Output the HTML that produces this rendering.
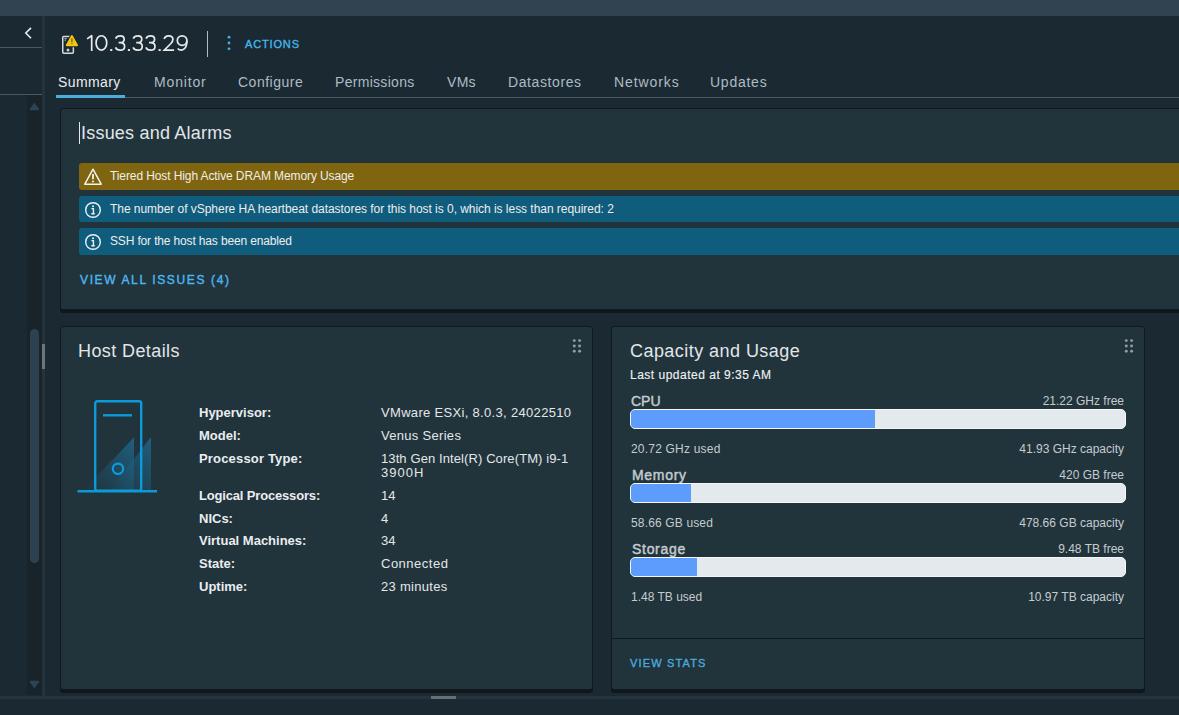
<!DOCTYPE html>
<html><head><meta charset="utf-8">
<style>
*{margin:0;padding:0;box-sizing:border-box}
html,body{width:1179px;height:715px;overflow:hidden;background:#1b2a32;font-family:"Liberation Sans",sans-serif}
.a{position:absolute}
.t{position:absolute;white-space:nowrap;line-height:1}
.card{position:absolute;background:#21333b;border:1px solid #0f1a20;border-radius:3px;box-shadow:0 3px 0 #0f171c}
</style></head><body>
<!-- top bar -->
<div class="a" style="left:0;top:0;width:1179px;height:16px;background:#314250"></div>
<!-- sidebar -->
<div class="a" style="left:0;top:47px;width:42px;height:1px;background:#4a5865"></div>
<div class="a" style="left:0;top:94px;width:42px;height:1px;background:#4a5865"></div>
<svg class="a" style="left:20px;top:22px" width="16" height="22" viewBox="0 0 16 22"><path d="M11 5.9 L5.8 11.05 L11 16.2" fill="none" stroke="#e8ecee" stroke-width="1.6"/></svg>
<div class="a" style="left:27px;top:95px;width:15px;height:600px;background:#18242a"></div>
<div class="a" style="left:30px;top:329px;width:9px;height:234px;background:#2c4250;border-radius:5px"></div>
<svg class="a" style="left:29px;top:102px" width="11" height="9" viewBox="0 0 11 9"><path d="M5.4 1.9 L9.3 7.4 L1.5 7.4 Z" fill="#2c4454" stroke="#2c4454" stroke-linejoin="round" stroke-width="1.7"/></svg>
<svg class="a" style="left:29px;top:680px" width="11" height="9" viewBox="0 0 11 9"><path d="M1.5 1.6 L9.3 1.6 L5.4 7.1 Z" fill="#2c4454" stroke="#2c4454" stroke-linejoin="round" stroke-width="1.7"/></svg>
<!-- vertical divider -->
<div class="a" style="left:42px;top:16px;width:3px;height:680px;background:#25343c"></div>
<div class="a" style="left:42px;top:344px;width:3px;height:25px;background:#6b757c"></div>
<!-- bottom splitter -->
<div class="a" style="left:0;top:696px;width:1179px;height:3px;background:#25343c"></div>
<div class="a" style="left:431px;top:696px;width:25px;height:3px;background:#656f76"></div>

<!-- header -->
<svg class="a" style="left:58px;top:30px" width="26" height="28" viewBox="0 0 26 28">
  <rect x="4.75" y="6.45" width="10.6" height="16.7" rx="0.9" fill="none" stroke="#d5d9dc" stroke-width="1.5"/>
  <circle cx="10" cy="20" r="1.5" fill="#c9ced2"/>
  <path d="M6.4 8.6 H8.8 M7.2 9.4 V11.2" stroke="#aab1b5" stroke-width="1"/>
  <path d="M13.9 6 L19.1 15.3 L8.7 15.3 Z" fill="#1b2a32" stroke="#1b2a32" stroke-width="4" stroke-linejoin="round"/>
  <path d="M13.9 6 L19.1 15.3 L8.7 15.3 Z" fill="#f2c414" stroke="#f2c414" stroke-width="1.8" stroke-linejoin="round"/>
  <rect x="13.15" y="8.3" width="1.5" height="3.9" fill="#86731c"/>
  <rect x="13.15" y="12.9" width="1.5" height="1" fill="#86731c"/>
</svg>
<svg class="a" style="left:80px;top:28px" width="112" height="28" viewBox="0 0 112 28"><g fill="none" stroke="#e6eaec" stroke-width="1.7">
<path d="M7.1 10.9 L11.7 7.75 V22.9" stroke-linejoin="round"/>
<ellipse cx="21.4" cy="14.9" rx="5.35" ry="7.15"/>
<path transform="translate(35,0)" d="M0.6 10.6 C1.4 8.8 3.2 7.8 5.3 7.8 C7.7 7.8 9.2 9.3 9.2 11.2 C9.2 13.3 7.5 14.6 5.1 14.6 H3.6 M5.1 14.6 C7.9 14.6 9.6 16.2 9.6 18.4 C9.6 20.6 7.7 22.1 5.2 22.1 C3 22.1 1.2 21.1 0.5 19.4"/>
<path transform="translate(52.6,0)" d="M0.6 10.6 C1.4 8.8 3.2 7.8 5.3 7.8 C7.7 7.8 9.2 9.3 9.2 11.2 C9.2 13.3 7.5 14.6 5.1 14.6 H3.6 M5.1 14.6 C7.9 14.6 9.6 16.2 9.6 18.4 C9.6 20.6 7.7 22.1 5.2 22.1 C3 22.1 1.2 21.1 0.5 19.4"/>
<path transform="translate(65.4,0)" d="M0.6 10.6 C1.4 8.8 3.2 7.8 5.3 7.8 C7.7 7.8 9.2 9.3 9.2 11.2 C9.2 13.3 7.5 14.6 5.1 14.6 H3.6 M5.1 14.6 C7.9 14.6 9.6 16.2 9.6 18.4 C9.6 20.6 7.7 22.1 5.2 22.1 C3 22.1 1.2 21.1 0.5 19.4"/>
<path transform="translate(83.3,0)" d="M0.9 11 C1.3 9 3.1 7.8 5.4 7.8 C7.9 7.8 9.6 9.4 9.6 11.5 C9.6 13 8.9 14.1 7.6 15.5 L1 22.05 H10.8" stroke-linejoin="miter"/>
<g transform="translate(96.5,0)"><circle cx="5.6" cy="12.6" r="4.8"/><path d="M10.4 12.8 C10.4 16 9.8 18.5 8.6 20 C7.6 21.3 6.3 22.1 4.8 22.1 C3.3 22.1 2 21.5 1.2 20.5"/></g>
</g><g fill="#e6eaec"><rect x="30.2" y="21.1" width="2.1" height="1.9"/><rect x="47.9" y="21.1" width="2.1" height="1.9"/><rect x="78.6" y="21.1" width="2.1" height="1.9"/></g></svg>
<div class="a" style="left:207px;top:31px;width:1px;height:26px;background:#b4bcc1"></div>
<svg class="a" style="left:226px;top:35px" width="6" height="16" viewBox="0 0 6 16"><circle cx="3" cy="2.2" r="1.4" fill="#49afd9"/><circle cx="3" cy="8" r="1.4" fill="#49afd9"/><circle cx="3" cy="13.8" r="1.4" fill="#49afd9"/></svg>
<div class="t" style="left:245px;top:39px;font-size:11px;font-weight:400;-webkit-text-stroke:0.35px #46b5ee;color:#46b5ee;letter-spacing:0.85px">ACTIONS</div>

<!-- tabs -->
<div class="a" style="left:56px;top:97px;width:1123px;height:1px;background:#4b5865"></div>
<div class="a" style="left:56px;top:95px;width:69px;height:3px;background:#49afd9"></div>
<div class="t" style="left:58px;top:75px;font-size:14px;color:#eaedf0;letter-spacing:0.4px">Summary</div>
<div class="t" style="left:154px;top:75px;font-size:14px;color:#adbbc4;letter-spacing:0.85px">Monitor</div>
<div class="t" style="left:238px;top:75px;font-size:14px;color:#adbbc4;letter-spacing:0.5px">Configure</div>
<div class="t" style="left:335px;top:75px;font-size:14px;color:#adbbc4;letter-spacing:0.3px">Permissions</div>
<div class="t" style="left:447px;top:75px;font-size:14px;color:#adbbc4;letter-spacing:0.3px">VMs</div>
<div class="t" style="left:508px;top:75px;font-size:14px;color:#adbbc4;letter-spacing:0.6px">Datastores</div>
<div class="t" style="left:614px;top:75px;font-size:14px;color:#adbbc4;letter-spacing:0.9px">Networks</div>
<div class="t" style="left:710px;top:75px;font-size:14px;color:#adbbc4;letter-spacing:0.75px">Updates</div>

<!-- Issues card -->
<div class="card" style="left:60px;top:108px;width:1130px;height:202px"></div>
<div class="a" style="left:79px;top:122px;width:1px;height:22px;background:#e6e9eb"></div>
<div class="t" style="left:81px;top:124px;font-size:18px;color:#e2e6e9;letter-spacing:0.21px">Issues and Alarms</div>

<div class="a" style="left:79px;top:163px;width:1100px;height:27px;background:#7f650f;border-radius:3px 0 0 3px"></div>
<svg class="a" style="left:83px;top:167px" width="20" height="20" viewBox="0 0 20 20"><path d="M10 2.2 L18.2 17.2 L1.8 17.2 Z" fill="none" stroke="#f2f2ee" stroke-width="1.5" stroke-linejoin="round"/><path d="M10 7 V12.3" stroke="#f2f2ee" stroke-width="1.8"/><circle cx="10" cy="14.6" r="1" fill="#f2f2ee"/></svg>
<div class="t" style="left:110px;top:170px;font-size:12px;color:#eeeeea;letter-spacing:-0.1px">Tiered Host High Active DRAM Memory Usage</div>

<div class="a" style="left:79px;top:196px;width:1100px;height:26px;background:#105c7d;border-radius:3px 0 0 3px"></div>
<svg class="a" style="left:83px;top:200px" width="20" height="20" viewBox="0 0 20 20"><circle cx="10" cy="10" r="7.3" fill="none" stroke="#eef0f0" stroke-width="1.4"/><circle cx="10" cy="6.3" r="1" fill="#eef0f0"/><path d="M8.4 8.6 H10.4 V13.8 M8.3 13.8 H11.8" fill="none" stroke="#eef0f0" stroke-width="1.4"/></svg>
<div class="t" style="left:110px;top:203px;font-size:12px;color:#eceeee;letter-spacing:-0.04px">The number of vSphere HA heartbeat datastores for this host is 0, which is less than required: 2</div>

<div class="a" style="left:79px;top:228px;width:1100px;height:27px;background:#105c7d;border-radius:3px 0 0 3px"></div>
<svg class="a" style="left:83px;top:232px" width="20" height="20" viewBox="0 0 20 20"><circle cx="10" cy="10" r="7.3" fill="none" stroke="#eef0f0" stroke-width="1.4"/><circle cx="10" cy="6.3" r="1" fill="#eef0f0"/><path d="M8.4 8.6 H10.4 V13.8 M8.3 13.8 H11.8" fill="none" stroke="#eef0f0" stroke-width="1.4"/></svg>
<div class="t" style="left:110px;top:235px;font-size:12px;color:#eceeee;letter-spacing:-0.15px">SSH for the host has been enabled</div>

<div class="t" style="left:80px;top:274px;font-size:12px;font-weight:400;-webkit-text-stroke:0.4px #4cb6ee;color:#4cb6ee;letter-spacing:1.63px">VIEW ALL ISSUES (4)</div>

<!-- Host details card -->
<div class="card" style="left:60px;top:326px;width:533px;height:364px"></div>
<div class="t" style="left:78px;top:342px;font-size:18px;color:#e2e6e9;letter-spacing:0.4px">Host Details</div>
<svg class="a" style="left:568px;top:336px" width="16" height="20" viewBox="0 0 16 20"><g fill="#949da2"><circle cx="6.3" cy="4.6" r="1.45"/><circle cx="11.6" cy="4.6" r="1.45"/><circle cx="6.3" cy="9.95" r="1.45"/><circle cx="11.6" cy="9.95" r="1.45"/><circle cx="6.3" cy="15.3" r="1.45"/><circle cx="11.6" cy="15.3" r="1.45"/></g></svg>

<svg class="a" style="left:76px;top:396px" width="84" height="100" viewBox="0 0 84 100">
  <defs>
    <linearGradient id="g1" x1="1" y1="0" x2="0.1" y2="1"><stop offset="0" stop-color="#1f7099" stop-opacity="0.75"/><stop offset="0.55" stop-color="#1d6388" stop-opacity="0.4"/><stop offset="1" stop-color="#1d5a7a" stop-opacity="0.05"/></linearGradient>
  </defs>
  <path d="M6.5 95 L58 41.5 L58 95 Z" fill="url(#g1)"/>
  <path d="M33 95 L75 41 L75 95 Z" fill="url(#g1)"/>
  <rect x="19.2" y="5.2" width="46" height="89.5" rx="2" fill="none" stroke="#0d9ad9" stroke-width="2.4"/>
  <path d="M27 19.3 H56" stroke="#0d9ad9" stroke-width="2.4"/>
  <circle cx="42" cy="72.8" r="5.2" fill="none" stroke="#0d9ad9" stroke-width="2.2"/>
  <path d="M1.5 95.2 H81" stroke="#0d9ad9" stroke-width="2.4"/>
</svg>

<div class="t" style="left:199px;top:406px;font-size:13px;font-weight:700;color:#eaedf0">Hypervisor:</div>
<div class="t" style="left:199px;top:429px;font-size:13px;font-weight:700;color:#eaedf0">Model:</div>
<div class="t" style="left:199px;top:452px;font-size:13px;font-weight:700;color:#eaedf0;letter-spacing:0.17px">Processor Type:</div>
<div class="t" style="left:199px;top:489px;font-size:13px;font-weight:700;color:#eaedf0;letter-spacing:-0.17px">Logical Processors:</div>
<div class="t" style="left:199px;top:512px;font-size:13px;font-weight:700;color:#eaedf0">NICs:</div>
<div class="t" style="left:199px;top:534px;font-size:13px;font-weight:700;color:#eaedf0">Virtual Machines:</div>
<div class="t" style="left:199px;top:557px;font-size:13px;font-weight:700;color:#eaedf0">State:</div>
<div class="t" style="left:199px;top:580px;font-size:13px;font-weight:700;color:#eaedf0">Uptime:</div>

<div class="t" style="left:381px;top:406px;font-size:13px;color:#e3e7ea;letter-spacing:0.32px">VMware ESXi, 8.0.3, 24022510</div>
<div class="t" style="left:381px;top:429px;font-size:13px;color:#e3e7ea;letter-spacing:0.3px">Venus Series</div>
<div class="t" style="left:381px;top:452px;font-size:13px;color:#e3e7ea;letter-spacing:0.1px">13th Gen Intel(R) Core(TM) i9-1</div>
<div class="t" style="left:381px;top:466px;font-size:13px;color:#e3e7ea;letter-spacing:1px">3900H</div>
<div class="t" style="left:381px;top:489px;font-size:13px;color:#e3e7ea">14</div>
<div class="t" style="left:381px;top:512px;font-size:13px;color:#e3e7ea">4</div>
<div class="t" style="left:381px;top:534px;font-size:13px;color:#e3e7ea">34</div>
<div class="t" style="left:381px;top:557px;font-size:13px;color:#e3e7ea;letter-spacing:0.5px">Connected</div>
<div class="t" style="left:381px;top:580px;font-size:13px;color:#e3e7ea;letter-spacing:0.3px">23 minutes</div>

<!-- Capacity card -->
<div class="card" style="left:611px;top:326px;width:534px;height:364px"></div>
<div class="t" style="left:630px;top:342px;font-size:18px;color:#e2e6e9;letter-spacing:0.45px">Capacity and Usage</div>
<div class="t" style="left:630px;top:369px;font-size:12px;font-weight:400;-webkit-text-stroke:0.15px #eef0f2;color:#eef0f2;letter-spacing:0.5px">Last updated at 9:35 AM</div>
<svg class="a" style="left:1120px;top:336px" width="16" height="20" viewBox="0 0 16 20"><g fill="#949da2"><circle cx="6.3" cy="4.6" r="1.45"/><circle cx="11.6" cy="4.6" r="1.45"/><circle cx="6.3" cy="9.95" r="1.45"/><circle cx="11.6" cy="9.95" r="1.45"/><circle cx="6.3" cy="15.3" r="1.45"/><circle cx="11.6" cy="15.3" r="1.45"/></g></svg>

<!-- CPU -->
<div class="t" style="left:631px;top:394px;font-size:14px;font-weight:400;-webkit-text-stroke:0.45px #c3cbcf;color:#c3cbcf;letter-spacing:0px">CPU</div>
<div class="t" style="left:900px;top:395px;width:224px;text-align:right;font-size:12px;color:#c5ccd0">21.22 GHz free</div>
<div class="a" style="left:630px;top:409px;width:496px;height:20px;background:#e3e9ec;border:1.5px solid #f4f6f7;border-radius:5px;overflow:hidden"><div style="width:244px;height:100%;background:#5d9cfa"></div></div>
<div class="t" style="left:631px;top:443px;font-size:12px;color:#c5ccd0;letter-spacing:0.2px">20.72 GHz used</div>
<div class="t" style="left:900px;top:443px;width:224px;text-align:right;font-size:12px;color:#c5ccd0">41.93 GHz capacity</div>
<div class="t" style="left:632px;top:468px;font-size:14px;font-weight:400;-webkit-text-stroke:0.45px #c3cbcf;color:#c3cbcf;letter-spacing:0.7px">Memory</div>
<div class="t" style="left:900px;top:469px;width:224px;text-align:right;font-size:12px;color:#c5ccd0">420 GB free</div>
<div class="a" style="left:630px;top:483px;width:496px;height:20px;background:#e3e9ec;border:1.5px solid #f4f6f7;border-radius:5px;overflow:hidden"><div style="width:60px;height:100%;background:#5d9cfa"></div></div>
<div class="t" style="left:631px;top:517px;font-size:12px;color:#c5ccd0;letter-spacing:0.15px">58.66 GB used</div>
<div class="t" style="left:900px;top:517px;width:224px;text-align:right;font-size:12px;color:#c5ccd0">478.66 GB capacity</div>
<div class="t" style="left:632px;top:542px;font-size:14px;font-weight:400;-webkit-text-stroke:0.45px #c3cbcf;color:#c3cbcf;letter-spacing:0.7px">Storage</div>
<div class="t" style="left:900px;top:543px;width:224px;text-align:right;font-size:12px;color:#c5ccd0">9.48 TB free</div>
<div class="a" style="left:630px;top:557px;width:496px;height:20px;background:#e3e9ec;border:1.5px solid #f4f6f7;border-radius:5px;overflow:hidden"><div style="width:66px;height:100%;background:#5d9cfa"></div></div>
<div class="t" style="left:631px;top:591px;font-size:12px;color:#c5ccd0;letter-spacing:0px">1.48 TB used</div>
<div class="t" style="left:900px;top:591px;width:224px;text-align:right;font-size:12px;color:#c5ccd0">10.97 TB capacity</div>

<div class="a" style="left:612px;top:638px;width:532px;height:1px;background:#101a20"></div>
<div class="t" style="left:630px;top:658px;font-size:11px;font-weight:400;-webkit-text-stroke:0.35px #49acdd;color:#49acdd;letter-spacing:1.15px">VIEW STATS</div>
</body></html>
